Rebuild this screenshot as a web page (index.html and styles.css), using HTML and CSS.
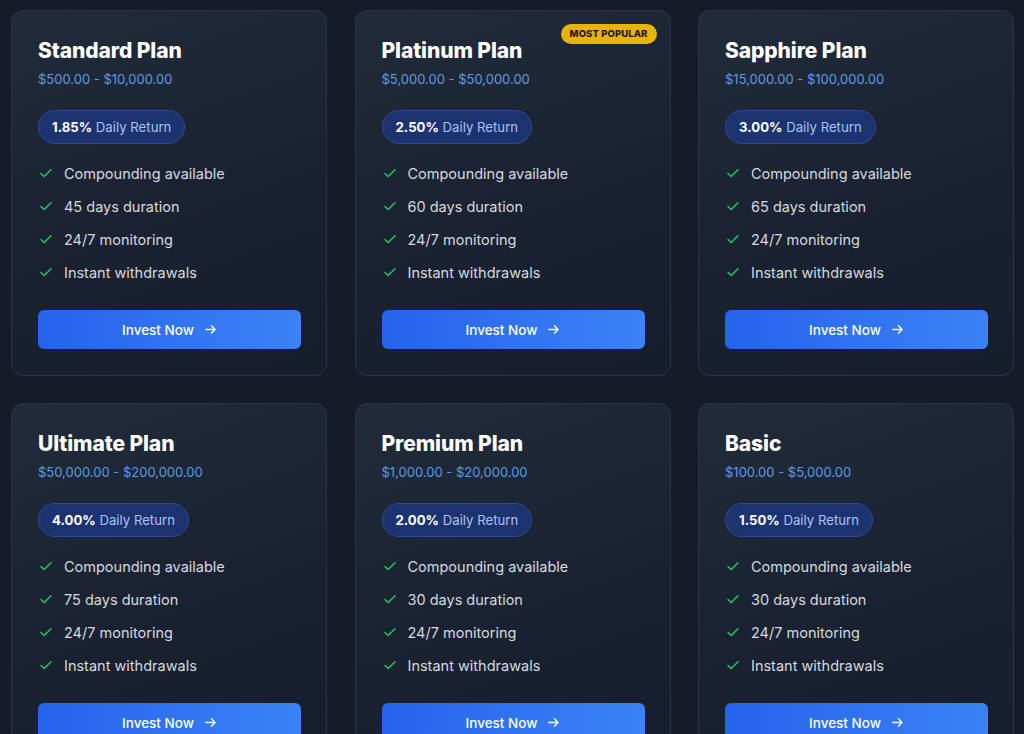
FILE: index.html
```html
<!DOCTYPE html>
<html>
<head>
<meta charset="utf-8">
<link rel="stylesheet" href="styles.css">
</head>
<body>
<div class="grid">
  <div class="card">
    <h2 class="title">Standard Plan</h2>
    <div class="price">$500.00 - $10,000.00</div>
    <div class="rate"><b>1.85%</b> Daily Return</div>
    <ul class="features">
      <li><svg class="check" viewBox="0 0 14 14"><path d="M2 7.5l3.2 3L12 3.8"/></svg>Compounding available</li>
      <li><svg class="check" viewBox="0 0 14 14"><path d="M2 7.5l3.2 3L12 3.8"/></svg>45 days duration</li>
      <li><svg class="check" viewBox="0 0 14 14"><path d="M2 7.5l3.2 3L12 3.8"/></svg>24/7 monitoring</li>
      <li><svg class="check" viewBox="0 0 14 14"><path d="M2 7.5l3.2 3L12 3.8"/></svg>Instant withdrawals</li>
    </ul>
    <button class="btn">Invest Now <svg class="arrow" viewBox="0 0 14 14"><path d="M2 7h10M8 3l4 4-4 4"/></svg></button>
  </div>
  <div class="card">
    <span class="popular">MOST POPULAR</span>
    <h2 class="title">Platinum Plan</h2>
    <div class="price">$5,000.00 - $50,000.00</div>
    <div class="rate"><b>2.50%</b> Daily Return</div>
    <ul class="features">
      <li><svg class="check" viewBox="0 0 14 14"><path d="M2 7.5l3.2 3L12 3.8"/></svg>Compounding available</li>
      <li><svg class="check" viewBox="0 0 14 14"><path d="M2 7.5l3.2 3L12 3.8"/></svg>60 days duration</li>
      <li><svg class="check" viewBox="0 0 14 14"><path d="M2 7.5l3.2 3L12 3.8"/></svg>24/7 monitoring</li>
      <li><svg class="check" viewBox="0 0 14 14"><path d="M2 7.5l3.2 3L12 3.8"/></svg>Instant withdrawals</li>
    </ul>
    <button class="btn">Invest Now <svg class="arrow" viewBox="0 0 14 14"><path d="M2 7h10M8 3l4 4-4 4"/></svg></button>
  </div>
  <div class="card">
    <h2 class="title">Sapphire Plan</h2>
    <div class="price">$15,000.00 - $100,000.00</div>
    <div class="rate"><b>3.00%</b> Daily Return</div>
    <ul class="features">
      <li><svg class="check" viewBox="0 0 14 14"><path d="M2 7.5l3.2 3L12 3.8"/></svg>Compounding available</li>
      <li><svg class="check" viewBox="0 0 14 14"><path d="M2 7.5l3.2 3L12 3.8"/></svg>65 days duration</li>
      <li><svg class="check" viewBox="0 0 14 14"><path d="M2 7.5l3.2 3L12 3.8"/></svg>24/7 monitoring</li>
      <li><svg class="check" viewBox="0 0 14 14"><path d="M2 7.5l3.2 3L12 3.8"/></svg>Instant withdrawals</li>
    </ul>
    <button class="btn">Invest Now <svg class="arrow" viewBox="0 0 14 14"><path d="M2 7h10M8 3l4 4-4 4"/></svg></button>
  </div>
  <div class="card">
    <h2 class="title">Ultimate Plan</h2>
    <div class="price">$50,000.00 - $200,000.00</div>
    <div class="rate"><b>4.00%</b> Daily Return</div>
    <ul class="features">
      <li><svg class="check" viewBox="0 0 14 14"><path d="M2 7.5l3.2 3L12 3.8"/></svg>Compounding available</li>
      <li><svg class="check" viewBox="0 0 14 14"><path d="M2 7.5l3.2 3L12 3.8"/></svg>75 days duration</li>
      <li><svg class="check" viewBox="0 0 14 14"><path d="M2 7.5l3.2 3L12 3.8"/></svg>24/7 monitoring</li>
      <li><svg class="check" viewBox="0 0 14 14"><path d="M2 7.5l3.2 3L12 3.8"/></svg>Instant withdrawals</li>
    </ul>
    <button class="btn">Invest Now <svg class="arrow" viewBox="0 0 14 14"><path d="M2 7h10M8 3l4 4-4 4"/></svg></button>
  </div>
  <div class="card">
    <h2 class="title">Premium Plan</h2>
    <div class="price">$1,000.00 - $20,000.00</div>
    <div class="rate"><b>2.00%</b> Daily Return</div>
    <ul class="features">
      <li><svg class="check" viewBox="0 0 14 14"><path d="M2 7.5l3.2 3L12 3.8"/></svg>Compounding available</li>
      <li><svg class="check" viewBox="0 0 14 14"><path d="M2 7.5l3.2 3L12 3.8"/></svg>30 days duration</li>
      <li><svg class="check" viewBox="0 0 14 14"><path d="M2 7.5l3.2 3L12 3.8"/></svg>24/7 monitoring</li>
      <li><svg class="check" viewBox="0 0 14 14"><path d="M2 7.5l3.2 3L12 3.8"/></svg>Instant withdrawals</li>
    </ul>
    <button class="btn">Invest Now <svg class="arrow" viewBox="0 0 14 14"><path d="M2 7h10M8 3l4 4-4 4"/></svg></button>
  </div>
  <div class="card">
    <h2 class="title">Basic</h2>
    <div class="price">$100.00 - $5,000.00</div>
    <div class="rate"><b>1.50%</b> Daily Return</div>
    <ul class="features">
      <li><svg class="check" viewBox="0 0 14 14"><path d="M2 7.5l3.2 3L12 3.8"/></svg>Compounding available</li>
      <li><svg class="check" viewBox="0 0 14 14"><path d="M2 7.5l3.2 3L12 3.8"/></svg>30 days duration</li>
      <li><svg class="check" viewBox="0 0 14 14"><path d="M2 7.5l3.2 3L12 3.8"/></svg>24/7 monitoring</li>
      <li><svg class="check" viewBox="0 0 14 14"><path d="M2 7.5l3.2 3L12 3.8"/></svg>Instant withdrawals</li>
    </ul>
    <button class="btn">Invest Now <svg class="arrow" viewBox="0 0 14 14"><path d="M2 7h10M8 3l4 4-4 4"/></svg></button>
  </div>
</div>
</body>
</html>
```
FILE: styles.css
```css
* { box-sizing: border-box; }
html, body { margin: 0; padding: 0; }
body {
  background: #151b29;
  font-family: Inter, "Noto Sans", sans-serif;
  color: #fff;
  height: 734px;
  overflow: hidden;
}
.grid {
  display: grid;
  grid-template-columns: repeat(3, 316px);
  column-gap: 27.5px;
  row-gap: 27px;
  padding: 10px 10px 0 11px;
}
.card {
  position: relative;
  height: 366px;
  border: 1px solid #2b3545;
  border-radius: 12px;
  background: linear-gradient(160deg, #212b3a 0%, #1a2231 55%, #161d2b 100%);
  padding: 26px 26px 26px 26px;
}
.title {
  margin: 0;
  font-size: 21px;
  line-height: 28px;
  font-weight: 800;
  letter-spacing: -0.1px;
  color: #ffffff;
}
.price {
  margin-top: 4px;
  font-size: 13px;
  line-height: 20px;
  color: #5b9be6;
}
.rate {
  display: inline-block;
  margin-top: 21px;
  height: 34px;
  line-height: 32px;
  padding: 0 13px;
  border-radius: 17px;
  background: #1c3370;
  border: 1px solid #2c4a99;
  font-size: 13.2px;
  color: #a9c4f5;
}
.rate b {
  color: #ffffff;
  font-weight: 700;
}
.features {
  list-style: none;
  margin: 19px 0 0 0;
  padding: 0;
}
.features li {
  display: flex;
  align-items: center;
  height: 20px;
  margin-bottom: 13px;
  font-size: 14.5px;
  color: #d6d9df;
}
.features li:last-child { margin-bottom: 0; }
.check {
  width: 14px;
  height: 14px;
  margin-left: 1px;
  margin-right: 11px;
  fill: none;
  stroke: #22c55e;
  stroke-width: 1.6;
  stroke-linecap: round;
  stroke-linejoin: round;
}
.btn {
  display: flex;
  align-items: center;
  justify-content: center;
  gap: 10px;
  width: 263px;
  height: 39px;
  margin-top: 28px;
  border: none;
  border-radius: 6px;
  background: linear-gradient(90deg, #2563eb 0%, #3b82f6 100%);
  color: #ffffff;
  font-family: Inter, "Noto Sans", sans-serif;
  font-size: 13.5px;
  font-weight: 500;
}
.arrow {
  width: 13px;
  height: 13px;
  fill: none;
  stroke: #ffffff;
  stroke-width: 1.4;
  stroke-linecap: round;
  stroke-linejoin: round;
}
.popular {
  position: absolute;
  top: 13px;
  right: 13px;
  height: 20px;
  line-height: 20px;
  padding: 0 9px;
  border-radius: 10px;
  background: #eab308;
  color: #1c1a10;
  font-size: 9.5px;
  font-weight: 800;
  letter-spacing: 0.1px;
}
```
